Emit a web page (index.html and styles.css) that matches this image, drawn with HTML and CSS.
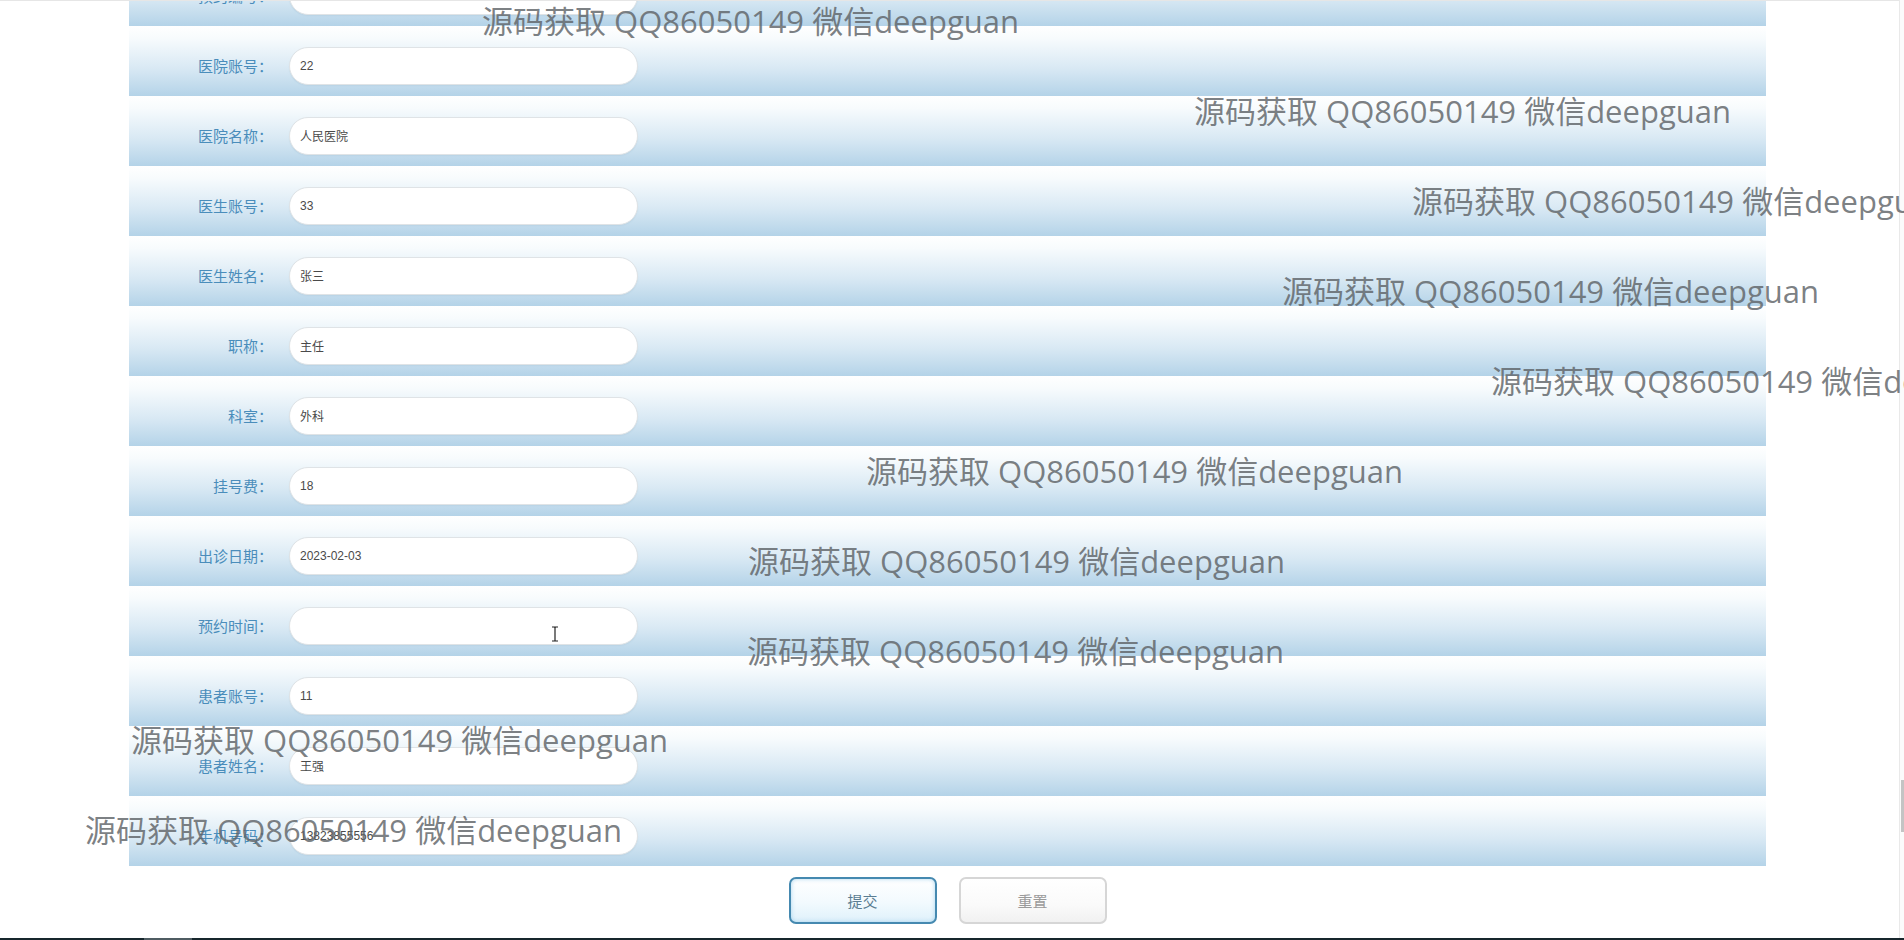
FILE: index.html
```html
<!DOCTYPE html>
<html lang="zh">
<head>
<meta charset="utf-8">
<title>挂号信息</title>
<link rel="stylesheet" href="styles.css">
</head>
<body>
<div class="page">
  <div class="viewport">
    <main class="main">
      <form class="form">
        <div class="row"><label class="lbl">预约编号：</label><input class="inp" type="text" value=""></div>
        <div class="row"><label class="lbl">医院账号：</label><input class="inp" type="text" value="22"></div>
        <div class="row"><label class="lbl">医院名称：</label><input class="inp" type="text" value="人民医院"></div>
        <div class="row"><label class="lbl">医生账号：</label><input class="inp" type="text" value="33"></div>
        <div class="row"><label class="lbl">医生姓名：</label><input class="inp" type="text" value="张三"></div>
        <div class="row"><label class="lbl">职称：</label><input class="inp" type="text" value="主任"></div>
        <div class="row"><label class="lbl">科室：</label><input class="inp" type="text" value="外科"></div>
        <div class="row"><label class="lbl">挂号费：</label><input class="inp" type="text" value="18"></div>
        <div class="row"><label class="lbl">出诊日期：</label><input class="inp" type="text" value="2023-02-03"></div>
        <div class="row"><label class="lbl">预约时间：</label><input class="inp" type="text" value=""></div>
        <div class="row"><label class="lbl">患者账号：</label><input class="inp" type="text" value="11"></div>
        <div class="row"><label class="lbl">患者姓名：</label><input class="inp" type="text" value="王强"></div>
        <div class="row"><label class="lbl">手机号码：</label><input class="inp" type="text" value="13823855556"></div>
        <div class="actions">
          <button type="button" class="btn btn-submit">提交</button>
          <button type="button" class="btn btn-reset">重置</button>
        </div>
      </form>
    </main>
    <div class="scrollbar"><div class="thumb"></div></div>
  </div>
  <div class="bottombar"><div class="bottomthumb"></div></div>

  <div class="watermarks">
    <span class="wm wm1">源码获取 QQ86050149 微信deepguan</span>
    <span class="wm wm2">源码获取 QQ86050149 微信deepguan</span>
    <span class="wm wm3">源码获取 QQ86050149 微信deepguan</span>
    <span class="wm wm4">源码获取 QQ86050149 微信deepguan</span>
    <span class="wm wm5">源码获取 QQ86050149 微信deepguan</span>
    <span class="wm wm6">源码获取 QQ86050149 微信deepguan</span>
    <span class="wm wm7">源码获取 QQ86050149 微信deepguan</span>
    <span class="wm wm8">源码获取 QQ86050149 微信deepguan</span>
    <span class="wm wm9">源码获取 QQ86050149 微信deepguan</span>
    <span class="wm wm10">源码获取 QQ86050149 微信deepguan</span>
  </div>
  <svg class="ibeam" width="8" height="16" viewBox="0 0 8 16"><path d="M1 1h2.5l0.5 0.6 0.5-0.6H7M4 1.6v12.8M1 15h2.5l0.5-0.6 0.5 0.6H7" fill="none" stroke="#222" stroke-width="1.2"/></svg>
</div>
</body>
</html>
```
FILE: styles.css
```css
* { box-sizing: border-box; }
html, body { margin: 0; padding: 0; background: #fff; }
body { font-family: "Noto Sans CJK SC", "Liberation Sans", sans-serif; }

.page {
  position: relative;
  width: 1904px;
  height: 940px;
  overflow: hidden;
  display: flex;
  flex-direction: column;
  background: #fff;
}

.viewport {
  flex: 1;
  display: flex;
  min-height: 0;
}

.main {
  flex: 1;
  overflow: hidden;
  border-top: 1px solid #e6e6e6;
}

.form {
  width: 1637px;
  margin: -45.5px 0 0 129px;
}

.row {
  height: 70px;
  padding: 21px 0 11px;
  display: flex;
  align-items: center;
  background: linear-gradient(to bottom, #ffffff 0%, #f7fbfd 18%, #d9e9f4 60%, #b4d3e8 100%);
}

.lbl {
  width: 144px;
  text-align: right;
  font-size: 15px;
  color: #4a8dbb;
  line-height: 20px;
  flex: none;
}

.inp {
  margin-left: 16px;
  width: 349px;
  height: 38px;
  border: 1px solid #dfe3e6;
  border-radius: 19px;
  background: #fff;
  padding: 0 10px;
  font-family: "Liberation Sans", "Noto Sans CJK SC", sans-serif;
  font-size: 12px;
  color: #4a4a4a;
  outline: none;
  box-shadow: 0 1px 1px rgba(160, 190, 210, 0.25);
}

.actions {
  display: flex;
  justify-content: center;
  gap: 22px;
  padding-top: 11px;
}

.btn {
  width: 148px;
  height: 47px;
  border-radius: 7px;
  font-family: "Noto Sans CJK SC", sans-serif;
  font-size: 15px;
  cursor: pointer;
}

.btn-submit {
  border: 2px solid #4589b0;
  background: linear-gradient(to bottom, #ffffff 0%, #f2fafe 55%, #dff1fb 100%);
  box-shadow: inset 0 0 4px rgba(150, 205, 235, 0.8);
  color: #5a7d92;
}

.btn-reset {
  border: 2px solid #d6d6d6;
  background: linear-gradient(to bottom, #ffffff 0%, #fafafa 60%, #f1f1f1 100%);
  color: #9a9a9a;
}

.scrollbar {
  width: 5px;
  flex: none;
  border-left: 1px solid #e9e9e9;
  background: #fbfbfb;
}

.thumb {
  margin-top: 780px;
  margin-left: 1px;
  width: 3px;
  height: 52px;
  background: #c4c4c4;
}

.bottombar {
  height: 2px;
  flex: none;
  background: #17262c;
}

.bottomthumb {
  margin-left: 144px;
  width: 48px;
  height: 2px;
  background: #4f5c62;
}

.watermarks {
  position: absolute;
  inset: 0;
  pointer-events: none;
}

.wm {
  position: absolute;
  white-space: nowrap;
  font-family: "Open Sans", "Noto Sans CJK SC", sans-serif;
  font-size: 31px;
  line-height: 34px;
  color: rgba(95, 100, 104, 0.82);
}

.wm1 { left: 482px; top: 4px; }
.wm2 { left: 1194px; top: 94px; }
.wm3 { left: 1412px; top: 184px; }
.wm4 { left: 1282px; top: 274px; }
.wm5 { left: 1491px; top: 364px; }
.wm6 { left: 866px; top: 454px; }
.wm7 { left: 748px; top: 544px; }
.wm8 { left: 747px; top: 634px; }
.wm9 { left: 131px; top: 723px; }
.wm10 { left: 85px; top: 813px; }

.ibeam {
  position: absolute;
  left: 551px;
  top: 626px;
}
```
